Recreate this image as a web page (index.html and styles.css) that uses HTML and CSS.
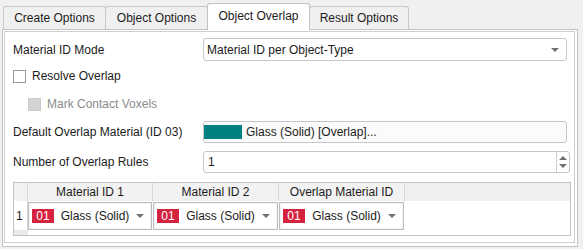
FILE: index.html
```html
<!DOCTYPE html>
<html lang="en">
<head>
  <meta charset="UTF-8">
  <title>Object Overlap</title>
  <link rel="stylesheet" href="styles.css">
</head>
<body>
  <div class="tab-bar">
    <div class="tab">Create Options</div>
    <div class="tab">Object Options</div>
    <div class="tab active">Object Overlap</div>
    <div class="tab">Result Options</div>
  </div>

  <div class="panel">
    <div class="panel-inner">
      <div class="row row-mode">
        <div class="label">Material ID Mode</div>
        <div class="combo">
          <span class="combo-text">Material ID per Object-Type</span>
          <span class="arrow"></span>
        </div>
      </div>

      <div class="row row-check">
        <span class="checkbox"></span>
        <span>Resolve Overlap</span>
      </div>

      <div class="row row-check sub disabled">
        <span class="checkbox"></span>
        <span>Mark Contact Voxels</span>
      </div>

      <div class="row row-default">
        <div class="label">Default Overlap Material (ID 03)</div>
        <div class="material-button">
          <span class="swatch"></span>
          <span>Glass (Solid) [Overlap]...</span>
        </div>
      </div>

      <div class="row row-rules">
        <div class="label">Number of Overlap Rules</div>
        <div class="spinbox">
          <span class="spin-value">1</span>
          <span class="spin-buttons">
            <span class="arrow up"></span>
            <span class="arrow"></span>
          </span>
        </div>
      </div>

      <div class="rules-table">
        <div class="head corner"></div>
        <div class="head">Material ID 1</div>
        <div class="head">Material ID 2</div>
        <div class="head">Overlap Material ID</div>
        <div class="head filler"></div>

        <div class="row-num">1</div>
        <div class="cell">
          <div class="cell-combo">
            <span class="badge">01</span>
            <span class="cell-text">Glass (Solid)</span>
            <span class="arrow"></span>
          </div>
        </div>
        <div class="cell">
          <div class="cell-combo">
            <span class="badge">01</span>
            <span class="cell-text">Glass (Solid)</span>
            <span class="arrow"></span>
          </div>
        </div>
        <div class="cell">
          <div class="cell-combo">
            <span class="badge">01</span>
            <span class="cell-text">Glass (Solid)</span>
            <span class="arrow"></span>
          </div>
        </div>
        <div class="cell empty"></div>

        <div class="foot-corner"></div>
        <div class="foot"></div>
      </div>
    </div>
  </div>
</body>
</html>
```

FILE: styles.css
```css
/* Object overlap dialog page */
body {
  margin: 0;
  background: #f0f0f0;
  font-family: "Liberation Sans", Arial, sans-serif;
  font-size: 12px;
  color: #1b1b1b;
  width: 583px;
  height: 249px;
  overflow: hidden;
}

.tab-bar {
  display: flex;
  align-items: flex-end;
  height: 26px;
  padding: 3px 0 0 3px;
  position: relative;
  z-index: 1;
}

.tab {
  height: 23px;
  line-height: 23px;
  box-sizing: border-box;
  border: 1px solid #c9c9c9;
  border-bottom: none;
  border-radius: 3px 3px 0 0;
  background: #f0f0f0;
  text-align: center;
  width: 103px;
  margin-right: -1px;
  margin-bottom: 0;
}

.tab:last-child {
  width: 100px;
}

.tab.active {
  height: 27px;
  line-height: 25px;
  background: #ffffff;
  border-color: #c2c2c2;
  margin-bottom: -1px;
  position: relative;
}

.panel {
  margin: 0 5px 0 2px;
  height: 218px;
  box-sizing: border-box;
  border: 1px solid #c2c2c2;
  background: #ffffff;
  padding: 1px 2px 3px 1px;
}

.panel-inner {
  height: 100%;
  box-sizing: border-box;
  border: 1px solid #cfcfcf;
  padding: 6px 3px 0 8px;
}

.row {
  display: flex;
  align-items: center;
}

.label {
  width: 190px;
  flex: none;
}

.row-mode {
  height: 23px;
}

.row-check {
  height: 24px;
  margin-top: 3px;
  gap: 6px;
}

.row-check.sub {
  margin-top: 4px;
  padding-left: 15px;
}

.checkbox {
  width: 13px;
  height: 13px;
  box-sizing: border-box;
  border: 1px solid #9c9c9c;
  background: #ffffff;
}

.disabled {
  color: #8c8c8c;
}

.disabled .checkbox {
  background: #d4d4d4;
  border-color: #cacaca;
}

.combo,
.material-button,
.spinbox {
  flex: 1;
  height: 100%;
  box-sizing: border-box;
  border: 1px solid #c6c6c6;
  border-radius: 3px;
  background: #ffffff;
  display: flex;
  align-items: center;
}

.combo {
  margin-right: 4px;
  padding: 0 7px 0 3px;
}

.combo-text {
  flex: 1;
}

.arrow {
  width: 0;
  height: 0;
  border-left: 4px solid transparent;
  border-right: 4px solid transparent;
  border-top: 4px solid #727272;
}

.arrow.up {
  border-top: none;
  border-bottom: 4px solid #727272;
}

.row-default {
  height: 22px;
  margin-top: 5px;
}

.material-button {
  margin-right: 4px;
  background: #fbfbfb;
  gap: 4px;
}

.swatch {
  width: 38px;
  height: 14px;
  background: #008080;
}

.row-rules {
  height: 22px;
  margin-top: 8px;
}

.spinbox {
  margin-right: 1px;
  align-items: stretch;
}

.spin-value {
  flex: 1;
  padding-left: 4px;
  display: flex;
  align-items: center;
}

.spin-buttons {
  width: 12px;
  border-left: 1px solid #d0d0d0;
  display: flex;
  flex-direction: column;
  align-items: center;
  justify-content: center;
  gap: 4px;
}

.rules-table {
  margin-top: 9px;
  margin-right: 0;
  height: 54px;
  box-sizing: border-box;
  border: 1px solid #c3c3c3;
  display: grid;
  grid-template-columns: 14px 125px 126px 126px 1fr;
  grid-template-rows: 18px 29px 5px;
}

.head {
  background: #f2f2f2;
  border-right: 1px solid #d8d8d8;
  text-align: center;
  line-height: 18px;
}

.head.filler {
  border-right: none;
  background: #efefef;
}

.row-num {
  background: #ffffff;
  border-right: 1px solid #d8d8d8;
  display: flex;
  align-items: center;
  padding-left: 2px;
}

.cell {
  padding: 1px 1px 0 0;
}

.cell-combo {
  height: 28px;
  box-sizing: border-box;
  border: 1px solid #bcbcbc;
  box-shadow: inset 0 0 0 1px #f4f4f4;
  display: flex;
  align-items: center;
  padding: 0 7px 0 3px;
}

.badge {
  width: 22px;
  height: 14px;
  background: #d5223f;
  color: #ffffff;
  text-align: center;
  line-height: 14px;
}

.cell-text {
  flex: 1;
  text-align: center;
}

.foot-corner {
  background: #e9e9e9;
}

.foot {
  grid-column: 2 / 6;
}
```
